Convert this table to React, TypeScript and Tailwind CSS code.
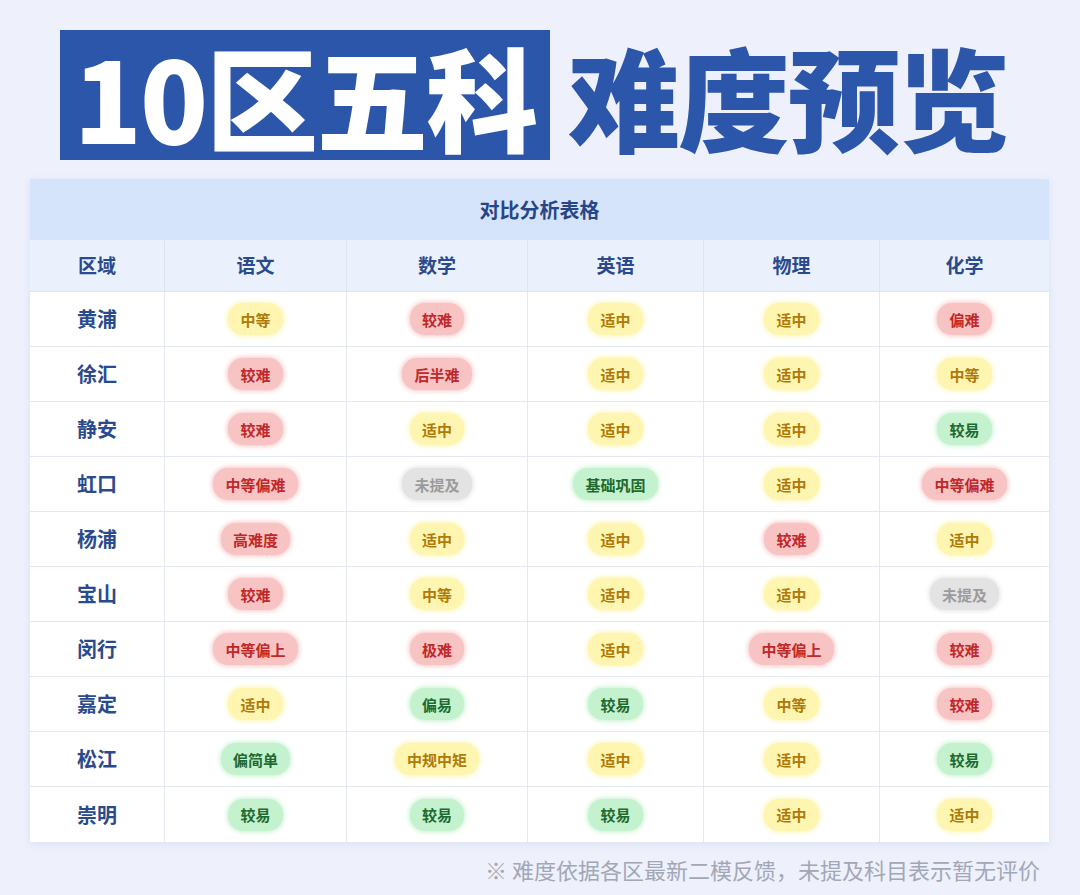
type Level = "y" | "r" | "g" | "n";

const badgeStyles: Record<Level, string> = {
  y: "bg-[#fdf5b0] text-[#b07a08] shadow-[0_0_5px_1px_#fdf5b0]",
  r: "bg-[#f7c3c3] text-[#c0282a] shadow-[0_0_5px_1px_#f7c3c3]",
  g: "bg-[#c5f2ce] text-[#1d6a30] shadow-[0_0_5px_1px_#c5f2ce]",
  n: "bg-[#e3e3e3] text-[#9b9b9b] shadow-[0_0_5px_1px_#e3e3e3]",
};

const subjects = ["语文", "数学", "英语", "物理", "化学"];

const rows: { area: string; cells: [string, Level][] }[] = [
  { area: "黄浦", cells: [["中等", "y"], ["较难", "r"], ["适中", "y"], ["适中", "y"], ["偏难", "r"]] },
  { area: "徐汇", cells: [["较难", "r"], ["后半难", "r"], ["适中", "y"], ["适中", "y"], ["中等", "y"]] },
  { area: "静安", cells: [["较难", "r"], ["适中", "y"], ["适中", "y"], ["适中", "y"], ["较易", "g"]] },
  { area: "虹口", cells: [["中等偏难", "r"], ["未提及", "n"], ["基础巩固", "g"], ["适中", "y"], ["中等偏难", "r"]] },
  { area: "杨浦", cells: [["高难度", "r"], ["适中", "y"], ["适中", "y"], ["较难", "r"], ["适中", "y"]] },
  { area: "宝山", cells: [["较难", "r"], ["中等", "y"], ["适中", "y"], ["适中", "y"], ["未提及", "n"]] },
  { area: "闵行", cells: [["中等偏上", "r"], ["极难", "r"], ["适中", "y"], ["中等偏上", "r"], ["较难", "r"]] },
  { area: "嘉定", cells: [["适中", "y"], ["偏易", "g"], ["较易", "g"], ["中等", "y"], ["较难", "r"]] },
  { area: "松江", cells: [["偏简单", "g"], ["中规中矩", "y"], ["适中", "y"], ["适中", "y"], ["较易", "g"]] },
  { area: "崇明", cells: [["较易", "g"], ["较易", "g"], ["较易", "g"], ["适中", "y"], ["适中", "y"]] },
];

const cols = "grid grid-cols-[134px_182px_181px_176px_176px_170px]";

function Badge({ text, level }: { text: string; level: Level }) {
  return (
    <span className={`inline-flex h-[32px] items-center rounded-[15px] px-[12px] text-[15px] font-bold leading-none ${badgeStyles[level]}`}>
      {text}
    </span>
  );
}

export default function App() {
  return (
    <div
      className="h-[895px] w-[1080px] overflow-hidden bg-[#eef1fc]"
      style={{ fontFamily: '"Noto Sans CJK SC", "Noto Sans", sans-serif' }}
    >
      <div className="flex items-center pl-[60px] pt-[30px]">
        <div className="flex h-[130px] w-[490px] items-center justify-center bg-[#2c56a9]">
          <span className="text-[112px] font-black leading-none tracking-[-2px] text-white">10区五科</span>
        </div>
        <span className="ml-[18px] text-[112px] font-black leading-none tracking-[-2px] text-[#2c56a9]">难度预览</span>
      </div>

      <div className="ml-[30px] mt-[19px] w-[1019px] overflow-hidden bg-white shadow-[0_2px_8px_rgba(60,80,150,0.1)]">
        <div className="flex h-[61px] items-center justify-center bg-[#d6e4fb] text-[20px] font-bold text-[#274686]">
          对比分析表格
        </div>
        <div className={`${cols} h-[52px] border-b border-[#dfe5f0] bg-[#eaf1fd]`}>
          <div className="flex items-center justify-center text-[19px] font-bold text-[#2b4a8c]">区域</div>
          {subjects.map((s) => (
            <div key={s} className="flex items-center justify-center border-l border-[#dfe5f0] text-[19px] font-bold text-[#2b4a8c]">
              {s}
            </div>
          ))}
        </div>
        {rows.map((row, i) => (
          <div key={row.area} className={`${cols} h-[55px] ${i < rows.length - 1 ? "border-b border-[#e3e8f2]" : ""}`}>
            <div className="flex items-center justify-center text-[20px] font-bold text-[#2b4a8c]">{row.area}</div>
            {row.cells.map(([t, l], j) => (
              <div key={j} className="flex items-center justify-center border-l border-[#e3e8f2]">
                <Badge text={t} level={l} />
              </div>
            ))}
          </div>
        ))}
      </div>

      <div className="mt-[16px] pr-[40px] text-right text-[22px] leading-none text-[#a2a7b7]">
        ※ 难度依据各区最新二模反馈，未提及科目表示暂无评价
      </div>
    </div>
  );
}
